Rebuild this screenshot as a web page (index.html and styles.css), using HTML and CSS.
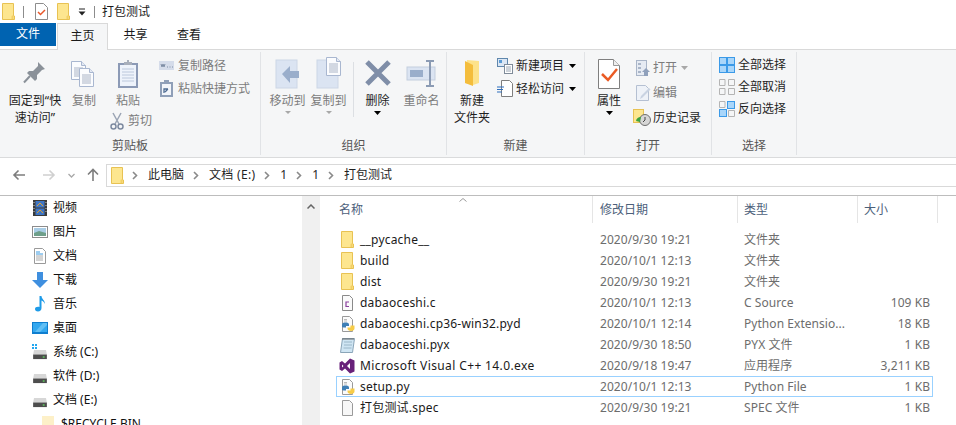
FILE: index.html
```html
<!DOCTYPE html>
<html lang="zh-CN">
<head>
<meta charset="utf-8">
<title>打包测试</title>
<link rel="stylesheet" href="styles.css">
</head>
<body>
<svg class="defs" width="0" height="0">
  <symbol id="folder" viewBox="0 0 13 17">
    <path d="M.5.5h11v12.500h1V16.500H.5z" fill="#fde68f" stroke="#e8c253"/>
    <path d="M9.500 16v-3l2-1v4z" fill="#f3cf64"/>
  </symbol>
  <symbol id="py" viewBox="0 0 14 16">
    <path d="M1.500.5h7l3 3v12h-10z" fill="#fbfbfb" stroke="#9a9a9a"/>
    <path d="M3 3.500h3M3 5h3" stroke="#bbb"/>
    <path d="M1 11V8.500C1 7 2.500 6.500 4.500 6.500S8 7 8 8.500V10H5v1.500H2.500z" fill="#3f7fb5"/>
    <path d="M13.500 9.500V12.500c0 1.500-1.500 2.500-3.500 2.500S6.500 14 6.500 12.500V11.500H9.500V9.500z" fill="#f7cc48"/>
  </symbol>
  <symbol id="drive" viewBox="0 0 16 12">
    <path d="M1.500 1h13l1 5H.5z" fill="#d7d7d7"/>
    <rect x=".5" y="6" width="15" height="5" fill="#4d4d4d"/>
    <rect x="11" y="8" width="2" height="1.500" fill="#5fd35f"/>
  </symbol>
  <symbol id="chev" viewBox="0 0 6 9">
    <path d="M1 1l3.500 3.500L1 8" fill="none" stroke="#8a8a8a" stroke-width="1.600"/>
  </symbol>
  <symbol id="caret" viewBox="0 0 7 4">
    <path d="M0 0h7L3.500 4z"/>
  </symbol>
  <symbol id="sheet" viewBox="0 0 15 19">
    <path d="M.5.5h10l4 4v14H.5z" fill="#fbfcfe" stroke="#a9b7d0"/>
    <path d="M10.500.5v4h4" fill="#e4e9f3" stroke="#a9b7d0"/>
    <path d="M3 7h9M3 9h9M3 11h9M3 13h9M3 15h9" stroke="#aab4c6"/>
  </symbol>
</svg>

<header class="titlebar">
  <svg class="ic-folder" width="13" height="17"><use href="#folder"/></svg>
  <span class="tb-sep"></span>
  <svg class="ic-check" width="13" height="17" viewBox="0 0 13 17"><path d="M.5.5h8l4 4v12H.5z" fill="#fff" stroke="#8d8d8d"/><path d="M3 9l2.500 2.500L10 7" fill="none" stroke="#e8572a" stroke-width="1.500"/></svg>
  <svg class="ic-folder" width="13" height="17"><use href="#folder"/></svg>
  <svg class="ic-qat" width="8" height="8" viewBox="0 0 8 8"><path d="M1 1h6" stroke="#222"/><path d="M.500 3.500h7L4 7.500z" fill="#222"/></svg>
  <span class="tb-sep"></span>
  <span class="tb-title">打包测试</span>
</header>

<nav class="tabs">
  <span class="tab tab-file">文件</span>
  <span class="tab tab-home">主页</span>
  <span class="tab tab-share">共享</span>
  <span class="tab tab-view">查看</span>
</nav>

<section class="ribbon">
  <div class="group g-clip">
    <div class="group-body">
      <div class="big w-pin">
        <svg width="32" height="32" viewBox="0 0 32 32"><path d="M19 5l7 7-3 1-5 5v4l-2 2-8-8 2-2h4l5-5z" fill="#8a9199"/><path d="M11 19l-6 6.500" stroke="#8a9199" stroke-width="2"/></svg>
        <span class="lbl dark">固定到“快<br>速访问”</span>
      </div>
      <div class="big w-copy dis">
        <svg width="32" height="32" viewBox="0 0 32 32"><use href="#sheet" x="3" y="4" width="15" height="19"/><use href="#sheet" x="11" y="11" width="15" height="19"/></svg>
        <span class="lbl">复制</span>
      </div>
      <div class="stack-paste dis">
        <div class="big w-paste">
          <svg width="32" height="32" viewBox="0 0 32 32"><rect x="6" y="6" width="20" height="25" fill="#8c9ab6"/><rect x="8" y="8" width="16" height="21" fill="#eef3fb"/><path d="M10 12h12M10 15h12M10 18h12M10 21h12M10 24h12" stroke="#bcc8dc"/><path d="M12 8V5h3V3h2v2h3v3z" fill="#a8afbb"/></svg>
          <span class="lbl">粘贴</span>
        </div>
        <div class="small s-cut">
          <svg width="16" height="18" viewBox="0 0 16 18"><path d="M4 1l6 11M12 1L6 12" stroke="#9aa4b4" stroke-width="1.500"/><circle cx="4.500" cy="14.500" r="2.500" fill="none" stroke="#7d8aa0" stroke-width="1.500"/><circle cx="11.500" cy="14.500" r="2.500" fill="none" stroke="#7d8aa0" stroke-width="1.500"/></svg>
          <span>剪切</span>
        </div>
      </div>
      <div class="small-col c-clip dis">
        <div class="small">
          <svg width="16" height="16" viewBox="0 0 16 16"><rect y="3" width="15" height="9" fill="#d5dcea"/><path d="M2 6l1 3 1-3 1 3 1-3M8 9h1M10.500 9h1M13 9h1" stroke="#7f8ea6" fill="none"/></svg>
          <span>复制路径</span>
        </div>
        <div class="small">
          <svg width="16" height="18" viewBox="0 0 16 18"><rect x="1" y="2" width="13" height="15" fill="#8f9fb8"/><rect x="3" y="4" width="9" height="11" fill="#f2f5fa"/><rect x="5" y="0" width="5" height="3" fill="#8f9fb8"/><path d="M5 13V9h4M9 9l-3 3" stroke="#4f6c93" fill="none" stroke-width="1.300"/></svg>
          <span>粘贴快捷方式</span>
        </div>
      </div>
    </div>
    <div class="group-label">剪贴板</div>
  </div>

  <div class="group g-org">
    <div class="group-body">
      <div class="big w-move dis">
        <svg width="32" height="32" viewBox="0 0 32 32"><rect x="4" y="3" width="21" height="28" fill="#dbe4f2" stroke="#ccd6e6"/><path d="M10 17l8-8v5h9v7h-9v5z" fill="#9aaecb"/></svg>
        <span class="lbl">移动到</span>
        <svg class="drop dim" width="6" height="3" viewBox="0 0 7 4" preserveAspectRatio="none"><use href="#caret"/></svg>
      </div>
      <div class="big w-copyto dis">
        <svg width="32" height="32" viewBox="0 0 32 32"><rect x="4" y="3" width="21" height="28" fill="#dbe4f2" stroke="#ccd6e6"/><use href="#sheet" x="13" y="0" width="15" height="19"/></svg>
        <span class="lbl">复制到</span>
        <svg class="drop dim" width="6" height="3" viewBox="0 0 7 4" preserveAspectRatio="none"><use href="#caret"/></svg>
      </div>
      <span class="vsep"></span>
      <div class="big w-del">
        <svg width="32" height="32" viewBox="0 0 32 32"><path d="M5 5l22 22M27 5L5 27" stroke="#7f8ea8" stroke-width="5"/></svg>
        <span class="lbl dark">删除</span>
        <svg class="drop" width="7" height="4"><use href="#caret"/></svg>
      </div>
      <div class="big w-ren dis">
        <svg width="32" height="32" viewBox="0 0 32 32"><rect x="1" y="10" width="28" height="13" fill="#dbe4f2" stroke="#c3cede"/><rect x="4" y="13" width="13" height="7" fill="#9aaecb"/><path d="M20 4h8M20 29h8M24 4v25" stroke="#8b9bb4" stroke-width="2"/></svg>
        <span class="lbl">重命名</span>
      </div>
    </div>
    <div class="group-label">组织</div>
  </div>

  <div class="group g-new">
    <div class="group-body">
      <div class="big w-newf">
        <svg width="32" height="32" viewBox="0 0 32 32"><path d="M11 3l12 1v22l-6 2L9 26z" fill="#fde28a"/><path d="M9 26V4l8 4v21z" fill="#f4bd3c"/></svg>
        <span class="lbl dark">新建<br>文件夹</span>
      </div>
      <div class="small-col c-new">
        <div class="small">
          <svg width="16" height="16" viewBox="0 0 16 16"><rect x=".5" y=".5" width="10" height="8" fill="#dbe7f5" stroke="#5f87ad"/><rect x="2" y="2" width="3" height="3" fill="#5b9bd5"/><rect x="7.500" y="6.500" width="8" height="9" fill="#fff" stroke="#7f8b99"/><path d="M9 9h5M9 11h5M9 13h5" stroke="#9aa6b4"/></svg>
          <span class="dark">新建项目</span>
          <svg class="cr" width="7" height="4"><use href="#caret"/></svg>
        </div>
        <div class="small">
          <svg width="16" height="17" viewBox="0 0 16 17"><path d="M4.500.5h8l3 3v13h-11z" fill="#fff" stroke="#7f7f7f"/><path d="M0 7h7M0 9.500h6M0 12h5" stroke="#2f6fbd" stroke-width="1.200"/></svg>
          <span class="dark">轻松访问</span>
          <svg class="cr" width="7" height="4"><use href="#caret"/></svg>
        </div>
      </div>
    </div>
    <div class="group-label">新建</div>
  </div>

  <div class="group g-open">
    <div class="group-body">
      <div class="big w-prop">
        <svg width="32" height="32" viewBox="0 0 32 32"><path d="M5.500 2.500h15l6 6v23h-21z" fill="#fff" stroke="#7f7f7f"/><path d="M20.500 2.500v6h6" fill="#eee" stroke="#9a9a9a"/><path d="M9 17l6 6 9-11" fill="none" stroke="#ea5b25" stroke-width="2.500"/></svg>
        <span class="lbl dark">属性</span>
        <svg class="drop" width="7" height="4"><use href="#caret"/></svg>
      </div>
      <div class="small-col c-open">
        <div class="small dis">
          <svg width="16" height="16" viewBox="0 0 16 16"><rect x="1.500" y=".5" width="10" height="15" fill="#e6ebf3" stroke="#a9b5c8"/><path d="M3 3h3v2H3zM3 7h3v2H3zM3 11h3v2H3z" fill="#a9b5c8"/><path d="M7 12l4-4 4 4h-2v4H9v-4z" fill="#8fa0bb"/></svg>
          <span>打开</span>
          <svg class="cr dim" width="7" height="4"><use href="#caret"/></svg>
        </div>
        <div class="small dis">
          <svg width="16" height="16" viewBox="0 0 16 16"><path d="M1.500.5h9l3 3v12h-12z" fill="#eef2f8" stroke="#b5c0d2"/><path d="M5 14l1-3 8-8 1.500 1.500-8 8z" fill="#c9d3e2"/></svg>
          <span>编辑</span>
        </div>
        <div class="small">
          <svg class="hist" width="18" height="17" viewBox="0 0 18 17"><rect x=".5" y=".5" width="10" height="13" fill="#fde68f" stroke="#e8c253"/><circle cx="12" cy="11" r="5.500" fill="#d6d6d6" stroke="#6f6f6f"/><path d="M12 8v3l-2 2" stroke="#444" fill="none"/><path d="M3 12a4.500 4.500 0 0 1 5-4l-1 5z" fill="#3ea33e"/></svg>
          <span class="dark">历史记录</span>
        </div>
      </div>
    </div>
    <div class="group-label">打开</div>
  </div>

  <div class="group g-sel">
    <div class="group-body">
      <div class="small-col c-sel">
        <div class="small">
          <svg width="16" height="16" viewBox="0 0 16 16"><rect width="16" height="16" fill="#3b9ae8"/><path d="M1 1h6v6H1zM9 1h6v6H9zM1 9h6v6H1zM9 9h6v6H9z" fill="#a9d6fa"/></svg>
          <span class="dark">全部选择</span>
        </div>
        <div class="small">
          <svg width="16" height="16" viewBox="0 0 16 16"><path d="M.5.500h5.500v6H.5zM9.500.500h6v6h-6zM.5 9.500h5.500v6H.5zM9.500 9.500h6v6h-6z" fill="none" stroke="#b4b4b4"/></svg>
          <span class="dark">全部取消</span>
        </div>
        <div class="small">
          <svg width="16" height="16" viewBox="0 0 16 16"><path d="M.5.500h5.500v6H.5zM9.500 9.500h6v6h-6z" fill="none" stroke="#b4b4b4"/><path d="M8 0h8v8H8zM0 8h8v8H0z" fill="#3b9ae8"/><path d="M9 1h6v6H9zM1 9h6v6H1z" fill="#a9d6fa"/></svg>
          <span class="dark">反向选择</span>
        </div>
      </div>
    </div>
    <div class="group-label">选择</div>
  </div>
</section>

<section class="addr">
  <svg class="nav-ic n-back" width="14" height="12" viewBox="0 0 14 12"><path d="M13 6H2M6.500 1.500L2 6l4.500 4.500" fill="none" stroke="#7d7d7d" stroke-width="1.600"/></svg>
  <svg class="nav-ic n-fwd" width="14" height="12" viewBox="0 0 14 12"><path d="M1 6h11M7.500 1.500L12 6l-4.500 4.500" fill="none" stroke="#d0d0d0" stroke-width="1.600"/></svg>
  <svg class="nav-ic n-down" width="7" height="5" viewBox="0 0 7 5"><path d="M.5 1l3 3 3-3" fill="none" stroke="#a8a8a8" stroke-width="1.300"/></svg>
  <svg class="nav-ic n-up" width="12" height="14" viewBox="0 0 12 14"><path d="M6 13V2M1 6.500L6 1.500l5 5" fill="none" stroke="#7d7d7d" stroke-width="1.600"/></svg>
  <div class="crumbs">
    <svg width="13" height="17"><use href="#folder"/></svg>
    <svg class="chev" width="6" height="9"><use href="#chev"/></svg>
    <span>此电脑</span>
    <svg class="chev" width="6" height="9"><use href="#chev"/></svg>
    <span class="crumb-latin">文档 (E:)</span>
    <svg class="chev" width="6" height="9"><use href="#chev"/></svg>
    <span>1</span>
    <svg class="chev" width="6" height="9"><use href="#chev"/></svg>
    <span>1</span>
    <svg class="chev" width="6" height="9"><use href="#chev"/></svg>
    <span>打包测试</span>
  </div>
</section>

<main class="explorer">
  <aside class="tree">
    <div class="tree-list">
      <div class="tree-row">
        <svg width="16" height="16" viewBox="0 0 16 16"><rect x="1" width="14" height="16" fill="#3a3a3a"/><rect x="3.500" y="1" width="9" height="6.500" fill="#3f76c4"/><rect x="3.500" y="8.500" width="9" height="6.500" fill="#3f76c4"/><path d="M5 6l3-3 3 3M5 13l3-3 3 3" stroke="#e0a030" fill="none"/><path d="M2 2v12M14 2v12" stroke="#ccc" stroke-dasharray="1 2"/></svg>
        <span>视频</span>
      </div>
      <div class="tree-row">
        <svg width="16" height="16" viewBox="0 0 16 16"><rect x=".5" y="2.500" width="15" height="11" fill="#fff" stroke="#8c8c8c"/><rect x="2" y="4" width="12" height="8" fill="#a9cde6"/><path d="M2 9l5-2 7 2v3H2z" fill="#6e9f8a"/></svg>
        <span>图片</span>
      </div>
      <div class="tree-row">
        <svg width="16" height="16" viewBox="0 0 16 16"><path d="M2.500.5h8l3 3v12h-11z" fill="#fff" stroke="#9a9a9a"/><path d="M4 4h4M4 6h7" stroke="#3a9ae0"/><path d="M4 8h7M4 10h7M4 12h7" stroke="#a8a8a8"/></svg>
        <span>文档</span>
      </div>
      <div class="tree-row">
        <svg width="16" height="16" viewBox="0 0 16 16"><path d="M5 0h6v8h5l-8 8-8-8h5z" fill="#3f8fdf"/></svg>
        <span>下载</span>
      </div>
      <div class="tree-row">
        <svg width="16" height="16" viewBox="0 0 16 16"><path d="M7.500 0h2c0 3 3.500 4 3.500 8-1-2-2-3-3.500-3.500V12c0 2-1.500 3.500-3.500 3.500S3 14.500 3 13s1.800-2.500 4.500-2z" fill="#1e9be8"/></svg>
        <span>音乐</span>
      </div>
      <div class="tree-row">
        <svg width="16" height="16" viewBox="0 0 16 16"><rect y="2" width="16" height="12" fill="#0f7ecf"/><rect x="1" y="3" width="14" height="9" fill="#34a8ef"/><path d="M3 12l8-9h4v2l-7 7z" fill="#62bff4"/></svg>
        <span>桌面</span>
      </div>
      <div class="tree-row">
        <svg width="16" height="16" viewBox="0 0 16 16"><use href="#drive" x="0" y="5" width="16" height="11"/><path d="M0 0h2v2H0zM3 0h2v2H3zM0 3h2v2H0zM3 3h2v2H3z" fill="#22a7f0"/></svg>
        <span>系统 (C:)</span>
      </div>
      <div class="tree-row">
        <svg width="16" height="16" viewBox="0 0 16 16"><use href="#drive" x="0" y="5" width="16" height="11"/></svg>
        <span>软件 (D:)</span>
      </div>
      <div class="tree-row">
        <svg width="16" height="16" viewBox="0 0 16 16"><use href="#drive" x="0" y="5" width="16" height="11"/></svg>
        <span>文档 (E:)</span>
      </div>
      <div class="tree-row tree-child">
        <svg width="12" height="16" viewBox="0 0 12 16"><rect width="12" height="16" fill="#fdf0c8"/></svg>
        <span>$RECYCLE.BIN</span>
      </div>
    </div>
    <div class="scroll">
      <svg width="8" height="5" viewBox="0 0 8 5"><path d="M.5 4.500L4 1l3.500 3.500" fill="none" stroke="#666" stroke-width="1.500"/></svg>
    </div>
  </aside>

  <section class="files">
    <div class="head">
      <svg class="sort" width="8" height="4" viewBox="0 0 8 4"><path d="M.5 3.500L4 .5l3.500 3" fill="none" stroke="#9a9a9a"/></svg>
      <div class="hc c-name">名称</div>
      <div class="hc c-date">修改日期</div>
      <div class="hc c-type">类型</div>
      <div class="hc c-size">大小</div>
    </div>
    <div class="rows">
      <div class="row">
        <div class="c-name name"><svg width="13" height="17"><use href="#folder"/></svg><span>__pycache__</span></div>
        <div class="c-date">2020/9/30 19:21</div><div class="c-type">文件夹</div><div class="c-size"></div>
      </div>
      <div class="row">
        <div class="c-name name"><svg width="13" height="17"><use href="#folder"/></svg><span>build</span></div>
        <div class="c-date">2020/10/1 12:13</div><div class="c-type">文件夹</div><div class="c-size"></div>
      </div>
      <div class="row">
        <div class="c-name name"><svg width="13" height="17"><use href="#folder"/></svg><span>dist</span></div>
        <div class="c-date">2020/9/30 19:21</div><div class="c-type">文件夹</div><div class="c-size"></div>
      </div>
      <div class="row">
        <div class="c-name name"><svg width="13" height="16" viewBox="0 0 13 16"><path d="M1.500.5h7l3 3v12h-10z" fill="#fafafa" stroke="#8a8a8a"/><path d="M8 7H5v4.500h3" fill="none" stroke="#8a3f9e" stroke-width="1.200"/></svg><span>dabaoceshi.c</span></div>
        <div class="c-date">2020/10/1 12:13</div><div class="c-type">C Source</div><div class="c-size">109 KB</div>
      </div>
      <div class="row">
        <div class="c-name name"><svg width="14" height="16" viewBox="0 0 14 16"><use href="#py"/></svg><span class="tight">dabaoceshi.cp36-win32.pyd</span></div>
        <div class="c-date">2020/10/1 12:14</div><div class="c-type">Python Extensio...</div><div class="c-size">18 KB</div>
      </div>
      <div class="row">
        <div class="c-name name ic-wide"><svg width="15" height="16" viewBox="0 0 15 16"><path d="M2.500 1.500h12l-2 14H.500z" fill="#cfe5f3" stroke="#8aa5b8"/><path d="M4 5h8M4 8h8M3.500 11h8" stroke="#9ab6c8"/><path d="M3 1v2M5 1v2M7 1v2M9 1v2M11 1v2M13 1v2" stroke="#666"/></svg><span>dabaoceshi.pyx</span></div>
        <div class="c-date">2020/9/30 18:50</div><div class="c-type">PYX 文件</div><div class="c-size">1 KB</div>
      </div>
      <div class="row">
        <div class="c-name name ic-vs"><svg width="16" height="16" viewBox="0 0 16 16"><path d="M11 .500l4.500 2v11l-4.500 2L6 10.500 3 13 .500 11.500v-7L3 3l3 2.500zM11 5L8 8l3 3zM3 6.500v3L4.500 8z" fill="#68217a"/></svg><span class="wide">Microsoft Visual C++ 14.0.exe</span></div>
        <div class="c-date">2020/9/18 19:47</div><div class="c-type">应用程序</div><div class="c-size">3,211 KB</div>
      </div>
      <div class="row selected">
        <div class="c-name name"><svg width="14" height="16" viewBox="0 0 14 16"><use href="#py"/></svg><span class="tight">setup.py</span></div>
        <div class="c-date">2020/10/1 12:13</div><div class="c-type">Python File</div><div class="c-size">1 KB</div>
      </div>
      <div class="row">
        <div class="c-name name"><svg width="13" height="16" viewBox="0 0 13 16"><path d="M1.500.5h7l3 3v12h-10z" fill="#f7f7f7" stroke="#9a9a9a"/></svg><span>打包测试.spec</span></div>
        <div class="c-date">2020/9/30 19:21</div><div class="c-type">SPEC 文件</div><div class="c-size">1 KB</div>
      </div>
    </div>
  </section>
</main>
</body>
</html>
```

FILE: styles.css
```css
* { box-sizing: border-box; }
html, body { margin: 0; padding: 0; }
body {
  width: 956px;
  height: 425px;
  overflow: hidden;
  background: #fff;
  color: #1a1a1a;
  font: 12px/16px "Noto Sans", "Noto Sans CJK SC", sans-serif;
}
svg { display: block; flex: none; }
.defs { position: absolute; }

/* title bar */
.titlebar { height: 23px; display: flex; align-items: center; padding-left: 2px; }
.tb-sep { width: 1px; height: 12px; background: #8c8c8c; margin-left: 8px; }
.ic-check { margin-left: 11px; }
.titlebar .ic-check + .ic-folder { margin-left: 9px; }
.ic-qat { margin-left: 8px; }
.ic-qat + .tb-sep { margin-left: 8px; }
.tb-title { margin-left: 7px; color: #1a1a1a; }

/* tabs */
.tabs { height: 26px; display: flex; }
.tab { display: flex; justify-content: center; padding-top: 4px; }
.tab-file { width: 56px; height: 23px; background: #0063b1; color: #fff; padding-top: 3px; }
.tab-home {
  width: 51px;
  margin-left: 1px;
  background: #f5f6f7;
  border: 1px solid #d9d9d9;
  border-bottom: 0;
  position: relative;
  z-index: 1;
  height: 27px;
}
.tab-share { width: 55px; }
.tab-view { width: 52px; }

/* ribbon */
.ribbon {
  height: 109px;
  display: flex;
  background: #f5f6f7;
  border-top: 1px solid #d9d9d9;
  border-bottom: 1px solid #dadbdc;
  padding-top: 2px;
}
.group { display: flex; flex-direction: column; height: 103px; border-right: 1px solid #e1e3e6; }
.group-body { flex: 1; display: flex; }
.group-label { height: 20px; text-align: center; color: #555; padding-top: 3px; line-height: 16px; }
.g-clip { width: 261px; }
.g-org { width: 186px; }
.g-new { width: 138px; }
.g-open { width: 127px; }
.g-sel { width: 85px; }

.big { display: flex; flex-direction: column; align-items: center; padding-top: 5px; text-align: center; }
.lbl { display: block; margin-top: 4px; line-height: 16.500px; white-space: nowrap; }
.drop { margin-top: 1px; }
.drop.dim, .cr.dim { fill: #a8a8a8; }
.dis { color: #7c7c7c; }
.dark { color: #1f1f1f; }

.w-pin { width: 70px; }
.w-copy { width: 28px; }
.stack-paste { width: 52px; margin-left: 4px; }
.w-paste { width: 52px; }
.s-cut { padding-left: 7px; }
.small { display: flex; align-items: center; gap: 3px; height: 23px; white-space: nowrap; }
.small-col { display: flex; flex-direction: column; }
.c-clip { margin-left: 5px; padding-top: 2px; }

.w-move { width: 41px; margin-left: 6px; }
.w-copyto { width: 41px; }
.vsep { width: 1px; height: 55px; background: #dcdfe3; margin: 10px 0 0 4px; }
.w-del { width: 47px; }
.w-ren { width: 41px; }

.w-newf { width: 50px; }
.c-new { padding-top: 2px; }
.cr { margin-left: 2px; }

.w-prop { width: 48px; }
.c-open { padding-top: 3px; margin-left: 2px; }
.c-open .small { height: 25px; gap: 2px; }
.hist { margin-left: -2px; margin-right: 0; }

.c-sel { margin-left: 7px; padding-top: 2px; }
.c-sel .small { height: 22px; }

/* address row */
.addr { height: 38px; display: flex; align-items: center; border-bottom: 1px solid #bdbdbd; padding: 0 0 3px 12px; }
.n-fwd { margin-left: 16px; }
.n-down { margin-left: 12px; }
.n-up { margin-left: 12px; }
.crumbs {
  flex: 1;
  height: 23px;
  margin-left: 7px;
  border: 1px solid #d9d9d9;
  border-right: 0;
  display: flex;
  align-items: center;
  padding-left: 4px;
  color: #1f1f1f;
}
.crumb-latin { letter-spacing: .3px; }
.chev { margin: 0 10px 0 9px; }
.crumbs svg:first-child + .chev { margin-left: 8px; margin-right: 10px; }

/* main */
.explorer { height: 230px; display: flex; overflow: hidden; }
.tree { width: 320px; display: flex; }
.tree-list { width: 302px; padding-left: 32px; }
.tree-row { display: flex; align-items: center; gap: 5px; height: 24px; color: #111; white-space: nowrap; }
.tree-child { padding-left: 10px; gap: 7px; }
.scroll { width: 18px; background: #f0f0f0; display: flex; justify-content: center; padding-top: 8px; }

.files { flex: 1; padding-left: 13px; position: relative; }
.sort { position: absolute; left: 139px; top: 2px; }
.head { height: 27px; display: flex; }
.hc { height: 27px; color: #4c607a; display: flex; align-items: center; border-right: 1px solid #e5e5e5; }
.head .c-name { width: 260px; padding-left: 6px; }
.head .c-date { width: 145px; padding-left: 7px; }
.head .c-type { width: 120px; padding-left: 6px; }
.head .c-size { width: 80px; padding-left: 6px; justify-content: flex-start; }

.rows { padding-top: 6px; }
.row { display: flex; height: 21px; align-items: center; color: #6d6d6d; white-space: nowrap; margin-left: 3px; letter-spacing: .05px; }
.row .c-name { width: 258px; }
.row .c-date { width: 144px; padding-left: 6px; }
.row .c-type { width: 118px; padding-left: 6px; }
.row .c-size { width: 74px; text-align: right; }
.name { display: flex; align-items: center; gap: 6px; padding-left: 5px; color: #1a1a1a; letter-spacing: .2px; }
.name .tight { margin-left: -1px; }
.name .wide { letter-spacing: .38px; }
.ic-wide { padding-left: 4px; gap: 5px; }
.ic-vs { padding-left: 3px; gap: 5px; }
.selected { width: 597px; box-shadow: inset 0 0 0 1px #99d1ff; }
```
